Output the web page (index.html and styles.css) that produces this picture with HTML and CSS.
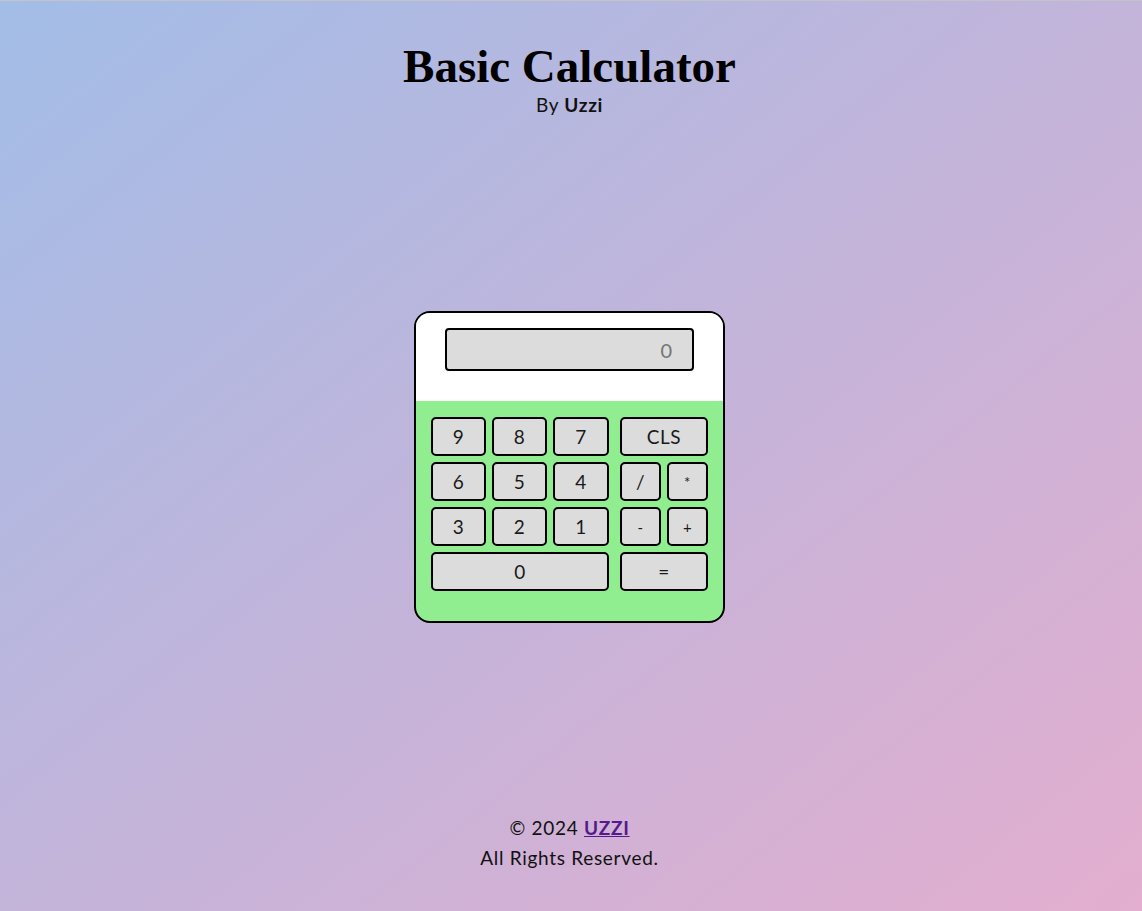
FILE: index.html
```html
<!DOCTYPE html>
<html lang="en">
<head>
<meta charset="UTF-8">
<title>Basic Calculator</title>
<link rel="stylesheet" href="styles.css">
</head>
<body>
<header class="header">
  <h1 class="title">Basic Calculator</h1>
  <p class="byline">By <strong>Uzzi</strong></p>
</header>
<main class="main">
  <div class="calc">
    <div class="calc-top">
      <input class="display" type="text" placeholder="0" readonly>
    </div>
    <div class="calc-keys">
      <div class="digits">
        <button class="key">9</button>
        <button class="key">8</button>
        <button class="key">7</button>
        <button class="key">6</button>
        <button class="key">5</button>
        <button class="key">4</button>
        <button class="key">3</button>
        <button class="key">2</button>
        <button class="key">1</button>
        <button class="key span3">0</button>
      </div>
      <div class="ops">
        <button class="key span2">CLS</button>
        <button class="key">/</button>
        <button class="key small">*</button>
        <button class="key small">-</button>
        <button class="key small">+</button>
        <button class="key span2">=</button>
      </div>
    </div>
  </div>
</main>
<footer class="footer">
  <p class="copy">© 2024 <a class="link" href="#">UZZI</a></p>
  <p class="rights">All Rights Reserved.</p>
</footer>
</body>
</html>
```
FILE: styles.css
```css
html, body {
  margin: 0;
  padding: 0;
}
body {
  height: 911px;
  box-sizing: border-box;
  border-top: 1px solid #c4c4c8;
  display: flex;
  flex-direction: column;
  background: linear-gradient(to bottom right, #a2bde7 0%, #c3b4da 50%, #e3aecf 100%);
  font-family: Lato, "Noto Sans", sans-serif;
  color: #111;
}
.header {
  text-align: center;
  padding-top: 38px;
  padding-right: 3px;
}
.title {
  margin: 0;
  font-family: "Liberation Serif", "DejaVu Serif", serif;
  font-weight: 700;
  font-size: 47px;
  line-height: 54px;
  color: #000;
}
.byline {
  margin: 0;
  font-size: 19px;
  line-height: 24px;
  letter-spacing: 0.7px;
}
.byline strong {
  font-weight: 700;
}
.main {
  flex: 1;
  display: flex;
  align-items: center;
  justify-content: center;
  padding-right: 3px;
  padding-top: 4px;
}
.calc {
  width: 311px;
  box-sizing: border-box;
  border: 2px solid #000;
  border-radius: 16px;
  overflow: hidden;
  background: #90ee90;
}
.calc-top {
  background: #fff;
  height: 88px;
  padding-top: 15px;
  box-sizing: border-box;
  display: flex;
  justify-content: center;
}
.display {
  width: 249px;
  height: 43px;
  box-sizing: border-box;
  border: 2px solid #000;
  border-radius: 4px;
  background: #dcdcdc;
  text-align: right;
  padding: 0 20px;
  font-family: Lato, "Noto Sans", sans-serif;
  font-size: 20px;
  outline: none;
}
.display::placeholder {
  color: #757575;
}
.calc-keys {
  display: flex;
  gap: 11px;
  padding: 16px 15px 30px;
}
.digits {
  display: grid;
  grid-template-columns: 55px 55px 56px;
  grid-auto-rows: 39px;
  gap: 6px;
}
.ops {
  display: grid;
  grid-template-columns: 41px 41px;
  grid-auto-rows: 39px;
  gap: 6px;
}
.key {
  margin: 0;
  padding: 0;
  box-sizing: border-box;
  border: 2px solid #000;
  border-radius: 5px;
  background: #dcdcdc;
  font-family: Lato, "Noto Sans", sans-serif;
  font-size: 19px;
  letter-spacing: 0.5px;
  color: #1a1a1a;
}
.key.small {
  font-size: 15px;
}
.span3 {
  grid-column: span 3;
}
.span2 {
  grid-column: span 2;
}
.footer {
  text-align: center;
  padding-bottom: 38px;
  padding-right: 3px;
  font-size: 19px;
  line-height: 30px;
  letter-spacing: 0.7px;
}
.copy, .rights {
  margin: 0;
}
.link {
  color: #551a8b;
  font-weight: 700;
}
```
